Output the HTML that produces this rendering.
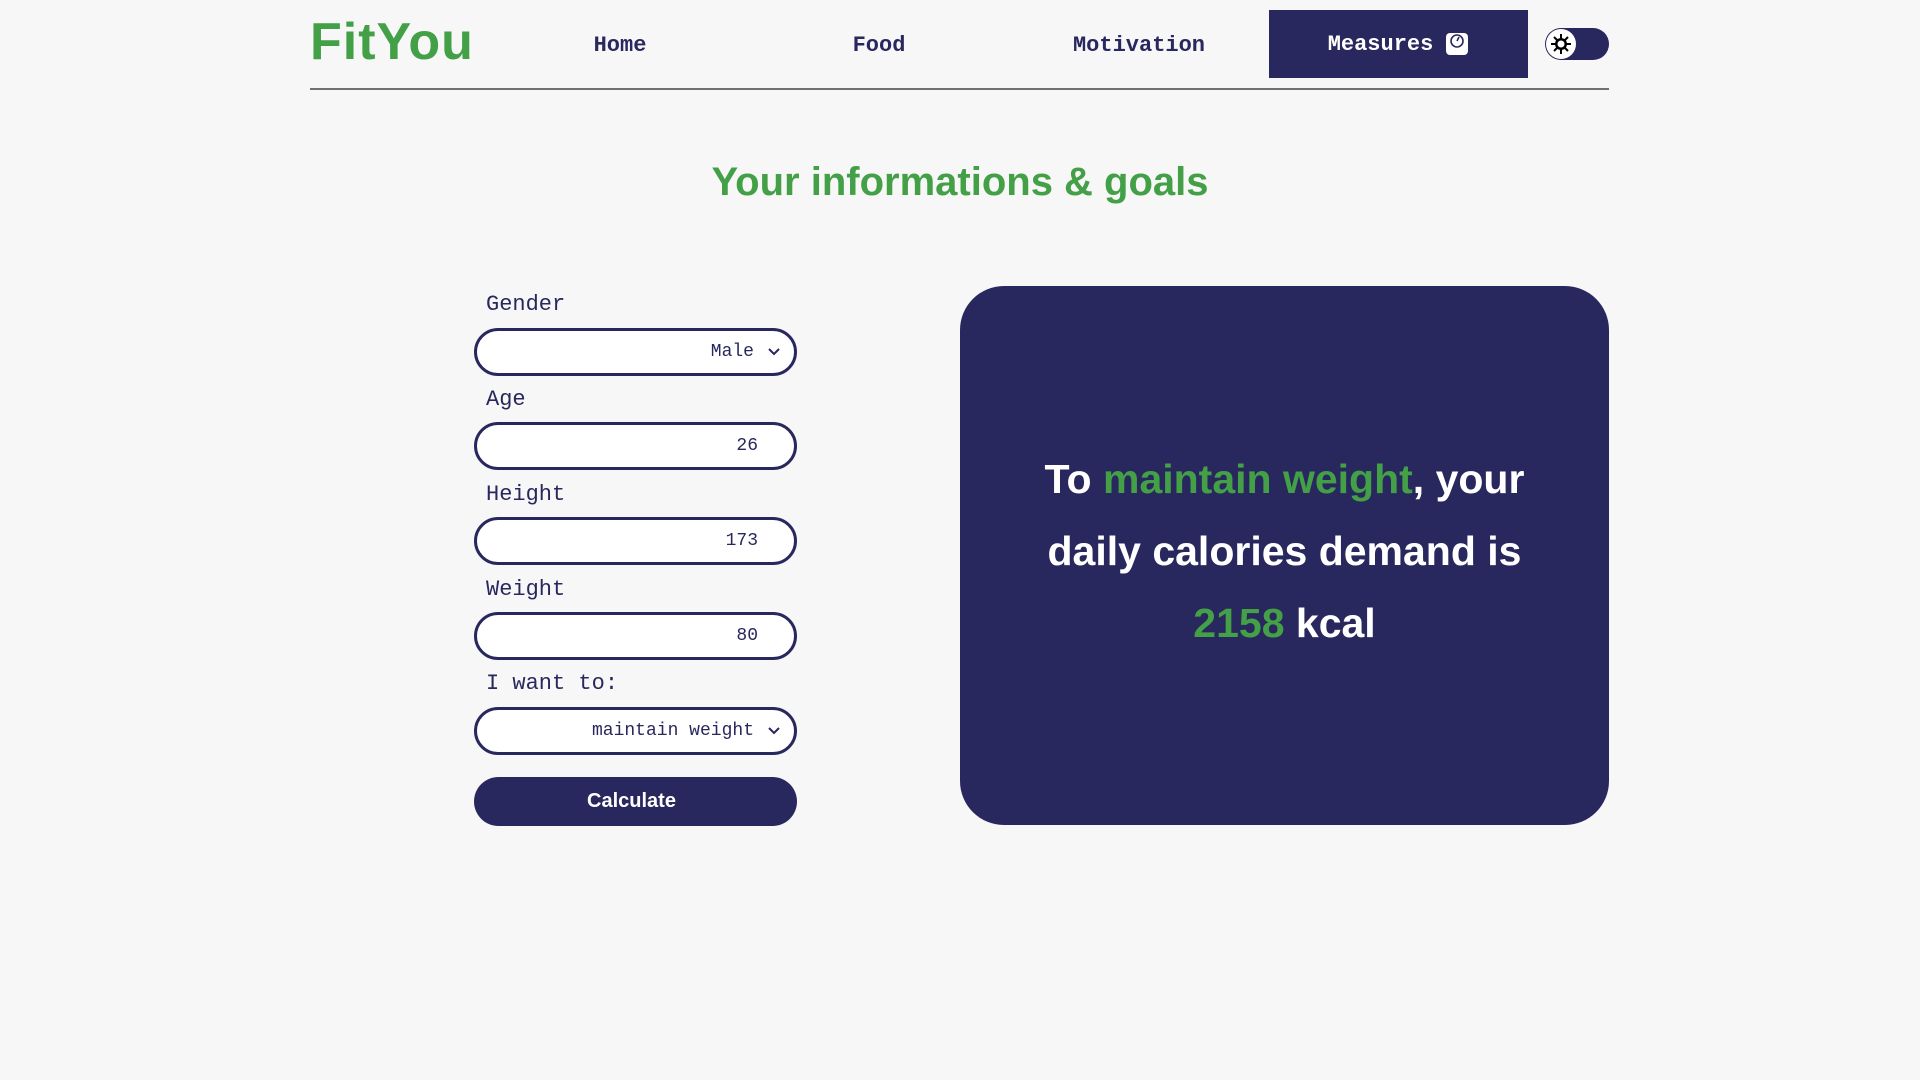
<!DOCTYPE html>
<html><head><meta charset="utf-8"><style>
*{margin:0;padding:0;box-sizing:border-box}
body{width:1920px;height:1080px;background:#f7f7f7;position:relative;overflow:hidden;font-family:"Liberation Sans",sans-serif}
.a{position:absolute}
.logo{left:310px;top:12px;font-size:52px;font-weight:bold;color:#43a047;letter-spacing:1px}
.nav{top:33px;font-family:"Liberation Mono",monospace;font-weight:bold;font-size:22px;color:#29285e;transform:translateX(-50%)}
.meas{left:1269px;top:10px;width:259px;height:68px;background:#29285e;color:#fff;font-family:"Liberation Mono",monospace;font-weight:bold;font-size:22px;display:flex;align-items:center;justify-content:center;gap:12px}
.tog{left:1545px;top:28px;width:64px;height:32px;border-radius:16px;background:#29285e}
.knob{left:1546px;top:29px;width:30px;height:30px;border-radius:50%;background:#fff;display:flex;align-items:center;justify-content:center}
.line{left:310px;top:88px;width:1299px;height:2px;background:#707070}
.title{left:0;width:1920px;top:160px;text-align:center;font-size:40px;font-weight:bold;color:#43a047}
.lbl{left:486px;font-family:"Liberation Mono",monospace;font-size:22px;color:#29285e}
.inp{left:474px;width:323px;height:48px;border:3px solid #29285e;border-radius:24px;background:#fff;font-family:"Liberation Mono",monospace;font-size:18px;color:#29285e;display:flex;align-items:center;justify-content:flex-end;padding-right:36px}
.sel{padding-right:14px}
.sel span{margin-right:14px}
.btn{left:474px;top:777px;width:323px;height:49px;border-radius:25px;background:#29285e;color:#fff;font-weight:bold;font-size:20px;display:flex;align-items:center;justify-content:center;padding-right:8px}
.card{left:960px;top:286px;width:649px;height:539px;border-radius:44px;background:#29285e;color:#fff;text-align:center;font-weight:bold;font-size:41px;line-height:72px;padding-top:157px}
.g{color:#43a047}
</style></head><body>
<div class="a logo">FitYou</div>
<div class="a nav" style="left:620px">Home</div>
<div class="a nav" style="left:879px">Food</div>
<div class="a nav" style="left:1139px">Motivation</div>
<div class="a meas">Measures <svg width="24" height="24" viewBox="0 0 24 24"><rect x="1" y="1" width="22" height="22" rx="4" fill="#fff"/><circle cx="12" cy="9" r="6" fill="none" stroke="#29285e" stroke-width="1.6"/><path d="M12 9 L14 5" stroke="#29285e" stroke-width="1.6"/></svg></div>
<div class="a tog"></div>
<div class="a knob"><svg width="22" height="22" viewBox="0 0 22 22"><g stroke="#000" stroke-width="2"><path d="M11 1v20M1 11h20M4 4l14 14M18 4L4 18"/></g><circle cx="11" cy="11" r="6" fill="#000"/><circle cx="11" cy="11" r="3.5" fill="#fff"/></svg></div>
<div class="a line"></div>
<div class="a title">Your informations &amp; goals</div>
<div class="a lbl" style="top:292px">Gender</div>
<div class="a inp sel" style="top:328px"><span>Male</span><svg width="12" height="8" viewBox="0 0 12 8"><path d="M1 1l5 5 5-5" fill="none" stroke="#29285e" stroke-width="2"/></svg></div>
<div class="a lbl" style="top:387px">Age</div>
<div class="a inp" style="top:422px">26</div>
<div class="a lbl" style="top:482px">Height</div>
<div class="a inp" style="top:517px">173</div>
<div class="a lbl" style="top:577px">Weight</div>
<div class="a inp" style="top:612px">80</div>
<div class="a lbl" style="top:671px">I want to:</div>
<div class="a inp sel" style="top:707px"><span>maintain weight</span><svg width="12" height="8" viewBox="0 0 12 8"><path d="M1 1l5 5 5-5" fill="none" stroke="#29285e" stroke-width="2"/></svg></div>
<div class="a btn">Calculate</div>
<div class="a card">To <span class="g">maintain weight</span>, your<br>daily calories demand is<br><span class="g">2158</span> kcal</div>
</body></html>
